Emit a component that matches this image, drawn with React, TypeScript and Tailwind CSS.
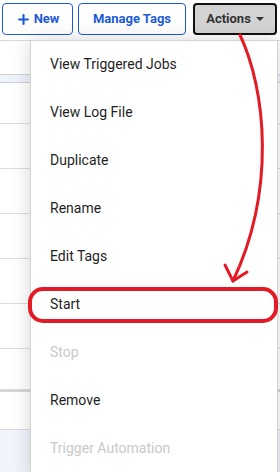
import { Plus } from "lucide-react";

const items = [
  { label: "View Triggered Jobs" },
  { label: "View Log File" },
  { label: "Duplicate" },
  { label: "Rename" },
  { label: "Edit Tags" },
  { label: "Start" },
  { label: "Stop", disabled: true },
  { label: "Remove" },
  { label: "Trigger Automation", disabled: true },
];

export default function App() {
  return (
    <div className="relative h-[472px] w-[280px] overflow-hidden bg-white font-['Roboto',sans-serif]">
      {/* toolbar */}
      <div className="flex h-[40px] items-start gap-[5px] pl-[2px] pt-[3px]">
        <button className="flex h-[32px] w-[71px] items-center justify-center gap-[3px] rounded-[4px] border border-[#1d5bd6] text-[13px] font-bold text-[#1d5bd6]">
          <Plus size={15} strokeWidth={3.4} />
          New
        </button>
        <button className="flex h-[32px] w-[108px] items-center justify-center rounded-[4px] border border-[#1d5bd6] text-[13px] font-bold text-[#1d5bd6]">
          Manage Tags
        </button>
        <button className="ml-[2px] flex h-[32px] w-[84px] items-center justify-center gap-[5px] rounded-[4px] border-2 border-[#111] bg-[#d3d3d3] text-[13px] font-bold text-[#333]">
          Actions
          <span className="h-0 w-0 border-x-[4px] border-t-[4px] border-x-transparent border-t-[#333]" />
        </button>
      </div>

      {/* table behind */}
      <div className="border-t border-[#d8d8d8]">
        <div className="h-[33px]" />
        <div className="h-[9px] border-y border-[#d0d0d8] bg-[#eef2fa]" />
        <div className="h-[41px] border-b border-[#dcdcdc]" />
        <div className="h-[45px] border-b border-[#dcdcdc]" />
        <div className="h-[45px] border-b border-[#dcdcdc]" />
        <div className="h-[45px] border-b border-[#dcdcdc]" />
        <div className="h-[45px] border-b border-[#dcdcdc]" />
        <div className="h-[45px] border-b border-[#dcdcdc]" />
        <div className="h-[43px] border-b-[3px] border-[#d6d6d6]" />
        <div className="h-[38px] border-b border-[#dcdcdc]" />
        <div className="h-[60px] bg-[#f1f4fb]" />
      </div>

      {/* dropdown menu */}
      <div className="absolute left-[30px] top-[40px] h-[440px] w-[248px] border border-[#d4d4d4] bg-white shadow-[0_0_18px_rgba(0,0,0,0.16)]">
        {items.map((item) => (
          <div
            key={item.label}
            className={`flex h-[48px] items-center pb-[1px] pl-[19px] text-[14px] ${
              item.disabled ? "text-[#c9c9c9]" : "text-[#1f1f1f]"
            }`}
          >
            {item.label}
          </div>
        ))}
      </div>

      {/* annotation */}
      <svg className="absolute left-0 top-0" width="280" height="472" fill="none">
        <path
          d="M240 35 C 266 90, 276 190, 233 281"
          stroke="#e21b25"
          strokeWidth="3"
          strokeLinecap="round"
        />
        <path
          d="M225 265 L233 281 L247 272"
          stroke="#e21b25"
          strokeWidth="3"
          strokeLinecap="round"
          strokeLinejoin="round"
        />
        <rect x="30" y="289" width="246" height="32" rx="13" stroke="#e21b25" strokeWidth="4" />
      </svg>
    </div>
  );
}
